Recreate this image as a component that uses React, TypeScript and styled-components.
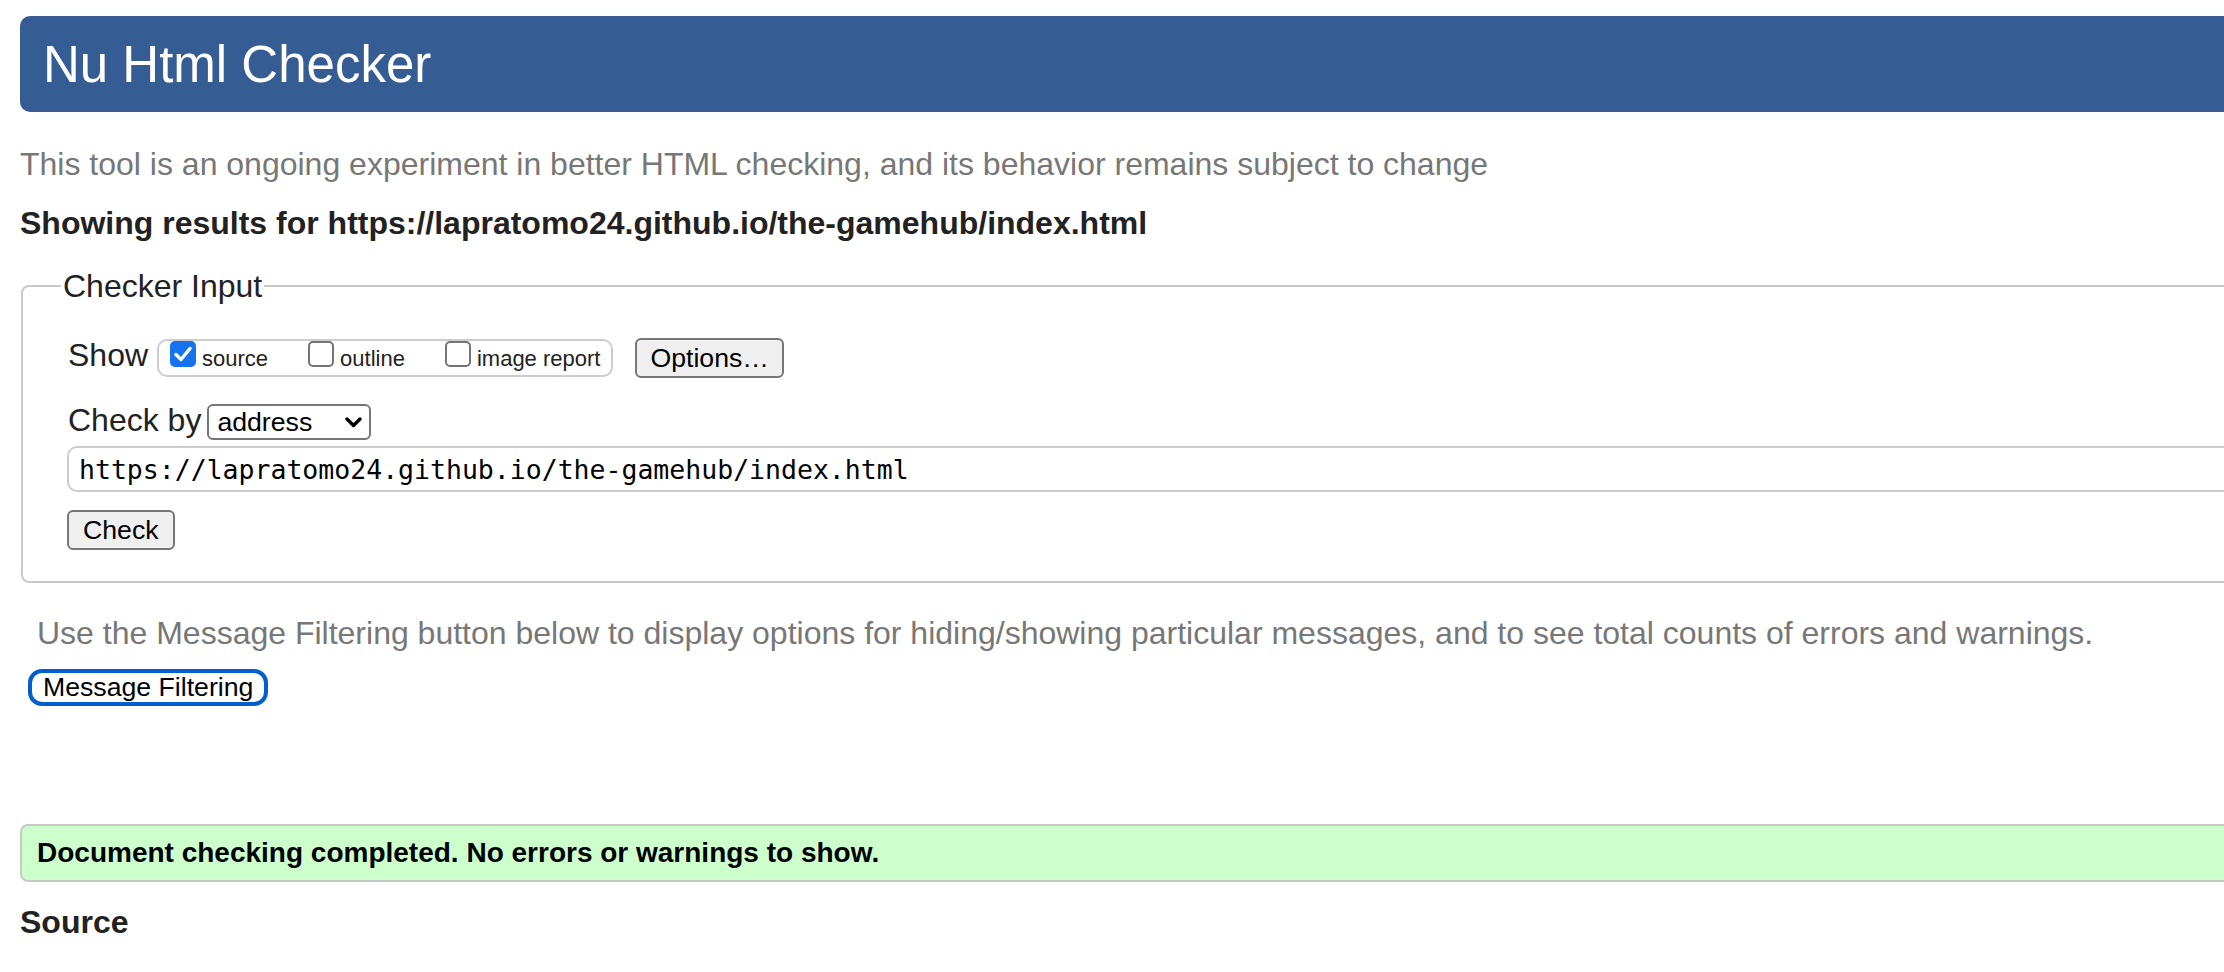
import React from "react";
import styled, { createGlobalStyle } from "styled-components";

const Global = createGlobalStyle`
  html, body {
    margin: 0;
    padding: 0;
    background: #ffffff;
    overflow: hidden;
  }
  body {
    font-family: "Liberation Sans", Arial, Helvetica, sans-serif;
  }
  #root {
    width: 2224px;
    height: 972px;
    overflow: hidden;
  }
`;

const Page = styled.main`
  width: 2400px;
  box-sizing: border-box;
  padding: 16px 0 0 20px;
  color: #222;
`;

const Title = styled.h1`
  margin: 0;
  height: 96px;
  display: flex;
  align-items: center;
  padding-left: 23px;
  background: #365d93;
  color: #ffffff;
  border-radius: 10px;
  font-size: 51px;
  font-weight: 400;
  line-height: 1;
`;

const Lead = styled.p<{ $indent?: number; $top: number }>`
  margin: ${(p) => p.$top}px 0 0 ${(p) => p.$indent ?? 0}px;
  font-size: 32px;
  line-height: 37px;
  color: #777777;
`;

const Heading = styled.h2<{ $top: number }>`
  margin: ${(p) => p.$top}px 0 0;
  font-size: 32px;
  line-height: 37px;
  font-weight: 700;
  color: #222;
`;

const Fieldset = styled.fieldset`
  margin: 26px 0 0 1px;
  min-width: 0;
  border: 2px solid #c9c9c9;
  border-radius: 8px;
  padding: 34px 0 31px 45px;
`;

const Legend = styled.legend`
  margin-left: -7px;
  padding: 0 2px;
  font-size: 32px;
  line-height: 36px;
  color: #222;
`;

const Row = styled.div<{ $top?: number; $height: number }>`
  display: flex;
  align-items: center;
  height: ${(p) => p.$height}px;
  margin-top: ${(p) => p.$top ?? 0}px;
`;

const RowLabel = styled.span<{ $gap: number; $lift: number }>`
  font-size: 32px;
  line-height: 32px;
  color: #222;
  margin: 0 ${(p) => p.$gap}px ${(p) => p.$lift}px 0;
`;

const CheckGroup = styled.div`
  display: flex;
  align-items: flex-end;
  box-sizing: border-box;
  height: 38px;
  padding: 0 11px 8px 11px;
  border: 2px solid #cccccc;
  border-radius: 10px;
`;

const CheckItem = styled.label`
  display: flex;
  align-items: flex-end;
  margin-right: 40px;
  &:last-child {
    margin-right: 0;
  }
`;

const Box = styled.span<{ $checked?: boolean }>`
  display: flex;
  align-items: center;
  justify-content: center;
  box-sizing: border-box;
  width: 26px;
  height: 26px;
  border-radius: 5px;
  border: ${(p) => (p.$checked ? "none" : "2px solid #747474")};
  background: ${(p) => (p.$checked ? "#1672ee" : "#ffffff")};
`;

const CheckText = styled.span`
  margin: 0 0 -3px 6px;
  font-size: 22px;
  line-height: 22px;
  color: #222;
`;

const NativeButton = styled.button`
  box-sizing: border-box;
  height: 40px;
  padding: 0 13px;
  background: #efefef;
  border: 2px solid #767676;
  border-radius: 6px;
  font-family: "Liberation Sans", Arial, Helvetica, sans-serif;
  font-size: 26.67px;
  color: #000;
`;

const OptionsButton = styled(NativeButton)`
  margin-left: 22px;
`;

const CheckButton = styled(NativeButton)`
  display: block;
  width: fit-content;
  margin: 18px 0 0 -1px;
  padding: 0 14px;
`;

const SelectWrap = styled.div`
  position: relative;
  width: 164px;
  height: 36px;
`;

const Select = styled.select`
  appearance: none;
  -webkit-appearance: none;
  box-sizing: border-box;
  width: 100%;
  height: 100%;
  padding: 0 0 0 8px;
  border: 2px solid #767676;
  border-radius: 6px;
  background: #ffffff;
  font-family: "Liberation Sans", Arial, Helvetica, sans-serif;
  font-size: 26.67px;
  color: #000;
`;

const Chevron = styled.svg`
  position: absolute;
  right: 9px;
  top: 13px;
  pointer-events: none;
`;

const UrlInput = styled.input`
  display: block;
  box-sizing: border-box;
  width: calc(100% + 1px);
  height: 46px;
  margin: 6px 0 0 -1px;
  padding: 0 10px;
  border: 2px solid #cccccc;
  border-radius: 10px;
  font-family: "DejaVu Sans Mono", "Liberation Mono", monospace;
  font-size: 26.5px;
  color: #000;
  background: #fff;
`;

const FilterButton = styled.button`
  display: block;
  width: fit-content;
  box-sizing: border-box;
  height: 37px;
  margin: 17px 0 0 8px;
  padding: 0 11px;
  background: #ffffff;
  border: 4px solid #005fcc;
  border-radius: 14px;
  font-family: "Liberation Sans", Arial, Helvetica, sans-serif;
  font-size: 26.67px;
  line-height: 1;
  color: #000;
`;

const Success = styled.div`
  display: flex;
  align-items: center;
  box-sizing: border-box;
  height: 58px;
  margin-top: 118px;
  padding-left: 15px;
  border: 2px solid #c8c8c8;
  border-radius: 8px;
  background: #ccffcc;
  font-size: 28px;
  font-weight: 700;
  color: #000;
`;

const CheckMark = () => (
  <svg width="18" height="16" viewBox="0 0 18 16" aria-hidden="true">
    <path
      d="M2 8.5 L7 13.5 L16 2.5"
      fill="none"
      stroke="#ffffff"
      strokeWidth="3.4"
      strokeLinecap="round"
      strokeLinejoin="round"
    />
  </svg>
);

const options = [
  { label: "source", checked: true },
  { label: "outline", checked: false },
  { label: "image report", checked: false },
];

export default function App() {
  return (
    <>
      <Global />
      <Page>
        <Title>Nu Html Checker</Title>
        <Lead $top={34}>
          This tool is an ongoing experiment in better HTML checking, and its
          behavior remains subject to change
        </Lead>
        <Heading $top={22}>
          Showing results for https://lapratomo24.github.io/the-gamehub/index.html
        </Heading>

        <Fieldset>
          <Legend>Checker Input</Legend>
          <Row $height={40}>
            <RowLabel $gap={9} $lift={6}>Show</RowLabel>
            <CheckGroup>
              {options.map((o) => (
                <CheckItem key={o.label}>
                  <Box $checked={o.checked}>{o.checked && <CheckMark />}</Box>
                  <CheckText>{o.label}</CheckText>
                </CheckItem>
              ))}
            </CheckGroup>
            <OptionsButton>Options…</OptionsButton>
          </Row>
          <Row $top={26} $height={36}>
            <RowLabel $gap={6} $lift={4}>Check by</RowLabel>
            <SelectWrap>
              <Select defaultValue="address">
                <option value="address">address</option>
                <option value="file">file upload</option>
                <option value="text">text input</option>
              </Select>
              <Chevron width="17" height="11" viewBox="0 0 17 11" aria-hidden="true">
                <polyline
                  points="2,2 8.5,8.5 15,2"
                  fill="none"
                  stroke="#000"
                  strokeWidth="3.4"
                  strokeLinecap="round"
                  strokeLinejoin="round"
                />
              </Chevron>
            </SelectWrap>
          </Row>
          <UrlInput
            readOnly
            value="https://lapratomo24.github.io/the-gamehub/index.html"
          />
          <CheckButton>Check</CheckButton>
        </Fieldset>

        <Lead $top={32} $indent={17}>
          Use the Message Filtering button below to display options for
          hiding/showing particular messages, and to see total counts of errors
          and warnings.
        </Lead>
        <FilterButton>Message Filtering</FilterButton>

        <Success>Document checking completed. No errors or warnings to show.</Success>
        <Heading $top={22}>Source</Heading>
      </Page>
    </>
  );
}
